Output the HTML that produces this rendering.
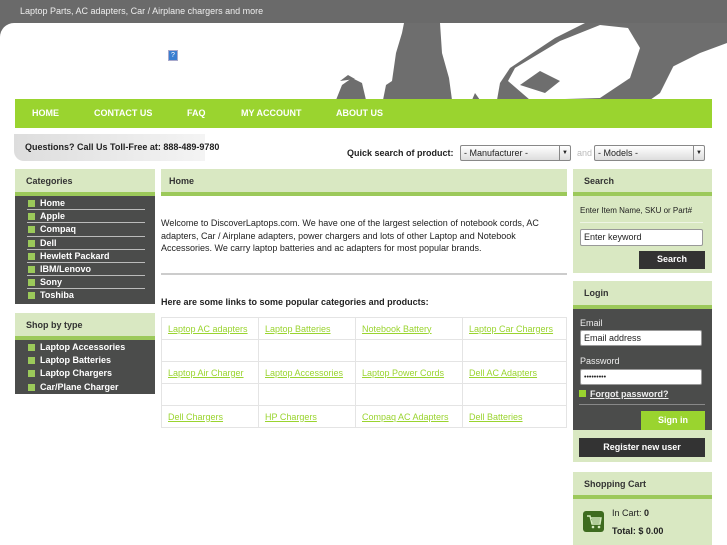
<!DOCTYPE html><html><head><meta charset="utf-8"><style>
*{margin:0;padding:0;box-sizing:border-box}
body{width:727px;height:545px;overflow:hidden;background:#fff;font-family:"Liberation Sans",sans-serif;position:relative;font-size:9px;color:#222}
.a{position:absolute}
.hd{background:#d9e8c2;border-bottom:4px solid #9cc95a;font-weight:bold;font-size:9px;padding-left:11px;color:#333}
.dk{background:#4b4c4b}
.li{color:#fff;font-weight:bold;font-size:9px;height:13.2px;line-height:12px;margin:0 10px 0 12px;border-bottom:1px solid #bbb;padding-left:13px;position:relative}
.li:before{content:"";position:absolute;left:1px;top:3px;width:7px;height:7px;background:#9bc95a}
.nb{border-bottom:none}
table{border-collapse:collapse}
td{border:1px solid #e4e4e4;height:22px;padding-left:6px;font-size:9px}
td a{color:#9ad42f;text-decoration:underline}
.inp{background:#fff;border:1px solid #999;border-radius:2px;font-size:9px;padding-left:3px;line-height:15px;height:17px}
</style></head><body>
<div class="a" style="left:0;top:0;width:727px;height:40px;background:#6a6a6a"></div>
<div class="a" style="left:0;top:4px;color:#eee;font-size:9px;padding:2px 0 0 20px">Laptop Parts, AC adapters, Car / Airplane chargers and more</div>
<div class="a" style="left:0;top:23px;width:727px;height:80px;background:#fff;border-radius:14px 14px 0 0"></div>
<svg class="a" style="left:0;top:23px" width="727" height="77"><g fill="#6e6e6e">
<polygon points="336,77 342,62 352,55 362,60 366,77"/>
<polygon points="340,58 348,52 355,56"/>
<polygon points="383,77 386,62 392,58 396,30 402,10 404,0 440,0 442,30 449,55 452,77"/>
<polygon points="472,77 475,70 480,77"/>
<polygon points="497,77 500,60 510,45 555,15 585,0 660,0 675,25 675,40 660,70 650,77"/>
<polygon points="640,0 727,0 727,20 700,30 670,45 660,40"/></g>
<polygon points="508,58 515,45 560,18 600,2 628,5 640,25 630,55 600,75 530,77" fill="#fff"/>
<polygon points="520,62 540,48 560,58 545,70" fill="#6e6e6e"/>
</svg>
<div class="a" style="left:168px;top:50px;width:10px;height:11px;background:#3a7ed0;border:1px solid #aac;color:#fff;font-size:7px;text-align:center;line-height:9px">?</div>
<div class="a" style="left:15px;top:99px;width:697px;height:29px;background:#9ad42f;color:#fff;font-weight:bold;font-size:9px">
<span class="a" style="left:17px;top:9px">HOME</span><span class="a" style="left:79px;top:9px">CONTACT US</span><span class="a" style="left:172px;top:9px">FAQ</span><span class="a" style="left:226px;top:9px">MY ACCOUNT</span><span class="a" style="left:321px;top:9px">ABOUT US</span></div>
<div class="a" style="left:14px;top:134px;width:191px;height:27px;background:linear-gradient(90deg,#ddd,#f4f4f4);border-radius:0 0 0 10px"></div>
<div class="a" style="left:25px;top:142px;font-weight:bold;font-size:9px;white-space:nowrap">Questions? Call Us Toll-Free at: 888-489-9780</div>
<div class="a" style="left:347px;top:148px;font-weight:bold;font-size:9px">Quick search of product:</div>
<div class="a inp" style="left:460px;top:145px;width:111px;height:16px;background:linear-gradient(#fff,#ddd);border-color:#888">- Manufacturer -<span class="a" style="right:0;top:0;width:11px;height:14px;border-left:1px solid #888;text-align:center;font-size:6px">▼</span></div>
<div class="a" style="left:577px;top:148px;color:#bbb">and</div>
<div class="a inp" style="left:594px;top:145px;width:111px;height:16px;background:linear-gradient(#fff,#ddd);border-color:#888">- Models -<span class="a" style="right:0;top:0;width:11px;height:14px;border-left:1px solid #888;text-align:center;font-size:6px">▼</span></div>

<div class="a hd" style="left:15px;top:169px;width:140px;height:27px;line-height:24px">Categories</div>
<div class="a dk" style="left:15px;top:196px;width:140px;height:108px;padding-top:1px">
<div class="li">Home</div><div class="li">Apple</div><div class="li">Compaq</div><div class="li">Dell</div><div class="li">Hewlett Packard</div><div class="li">IBM/Lenovo</div><div class="li">Sony</div><div class="li nb">Toshiba</div></div>
<div class="a hd" style="left:15px;top:313px;width:140px;height:27px;line-height:24px">Shop by type</div>
<div class="a dk" style="left:15px;top:340px;width:140px;height:54px;padding-top:1px">
<div class="li nb">Laptop Accessories</div><div class="li nb">Laptop Batteries</div><div class="li nb">Laptop Chargers</div><div class="li nb">Car/Plane Charger</div></div>

<div class="a hd" style="left:161px;top:169px;width:406px;height:27px;line-height:24px;padding-left:8px">Home</div>
<div class="a" style="left:161px;top:217px;width:406px;font-size:9px;line-height:12.5px">Welcome to DiscoverLaptops.com. We have one of the largest selection of notebook cords, AC adapters, Car / Airplane adapters, power chargers and lots of other Laptop and Notebook Accessories. We carry laptop batteries and ac adapters for most popular brands.</div>
<div class="a" style="left:161px;top:273px;width:406px;height:2px;background:#ccc"></div>
<div class="a" style="left:161px;top:297px;font-weight:bold;font-size:9px">Here are some links to some popular categories and products:</div>
<table class="a" style="left:161px;top:317px;width:406px">
<tr><td style="width:97px"><a>Laptop AC adapters</a></td><td style="width:97px"><a>Laptop Batteries</a></td><td style="width:107px"><a>Notebook Battery </a></td><td><a>Laptop Car Chargers</a></td></tr>
<tr><td></td><td></td><td></td><td></td></tr>
<tr><td><a>Laptop Air Charger</a></td><td><a>Laptop Accessories</a></td><td><a>Laptop Power Cords</a></td><td><a>Dell AC Adapters</a></td></tr>
<tr><td></td><td></td><td></td><td></td></tr>
<tr><td><a>Dell Chargers</a></td><td><a>HP Chargers</a></td><td><a>Compaq AC Adapters</a></td><td><a>Dell Batteries</a></td></tr></table>

<div class="a" style="left:573px;top:169px;width:139px;height:104px;background:#d9e8c2"></div>
<div class="a hd" style="left:573px;top:169px;width:139px;height:27px;line-height:24px">Search</div>
<div class="a" style="left:580px;top:206px;font-size:8px">Enter Item Name, SKU or Part#</div>
<div class="a" style="left:580px;top:222px;width:123px;height:1px;background:#eef5e4"></div>
<div class="a inp" style="left:580px;top:229px;width:123px">Enter keyword</div>
<div class="a" style="left:639px;top:251px;width:66px;height:18px;background:#333;color:#fff;font-weight:bold;text-align:center;line-height:17px">Search</div>

<div class="a" style="left:573px;top:281px;width:139px;height:181px;background:#d9e8c2"></div>
<div class="a hd" style="left:573px;top:281px;width:139px;height:28px;line-height:25px">Login</div>
<div class="a dk" style="left:573px;top:309px;width:139px;height:121px"></div>
<div class="a" style="left:580px;top:318px;color:#eee;font-size:9px">Email</div>
<div class="a inp" style="left:580px;top:330px;width:122px;height:16px">Email address</div>
<div class="a" style="left:580px;top:356px;color:#eee;font-size:9px">Password</div>
<div class="a inp" style="left:580px;top:369px;width:122px;height:16px;font-size:7px">•••••••••</div>
<div class="a" style="left:579px;top:390px;width:7px;height:7px;background:#9ad42f"></div>
<div class="a" style="left:590px;top:389px;color:#eee;font-weight:bold;text-decoration:underline">Forgot password?</div>
<div class="a" style="left:579px;top:404px;width:126px;height:1px;background:#888"></div>
<div class="a" style="left:641px;top:411px;width:64px;height:19px;background:#9ad42f;color:#fff;font-weight:bold;text-align:center;line-height:18px">Sign in</div>
<div class="a" style="left:579px;top:438px;width:126px;height:19px;background:#333;color:#fff;font-weight:bold;text-align:center;line-height:18px">Register new user</div>

<div class="a" style="left:573px;top:472px;width:139px;height:73px;background:#d9e8c2"></div>
<div class="a hd" style="left:573px;top:472px;width:139px;height:27px;line-height:24px">Shopping Cart</div>
<svg class="a" style="left:583px;top:511px" width="21" height="21"><rect width="21" height="21" rx="3" fill="#3e6b1f"/><path d="M4 5h3l2 8h8l1-6H8M9 9h8M9 11h8" stroke="#d6ecc0" stroke-width="1.4" fill="none"/><circle cx="10" cy="16" r="1.3" fill="#d6ecc0"/><circle cx="16" cy="16" r="1.3" fill="#d6ecc0"/></svg>
<div class="a" style="left:612px;top:508px">In Cart: <b>0</b></div>
<div class="a" style="left:612px;top:526px;font-weight:bold">Total: $ 0.00</div>
</body></html>
